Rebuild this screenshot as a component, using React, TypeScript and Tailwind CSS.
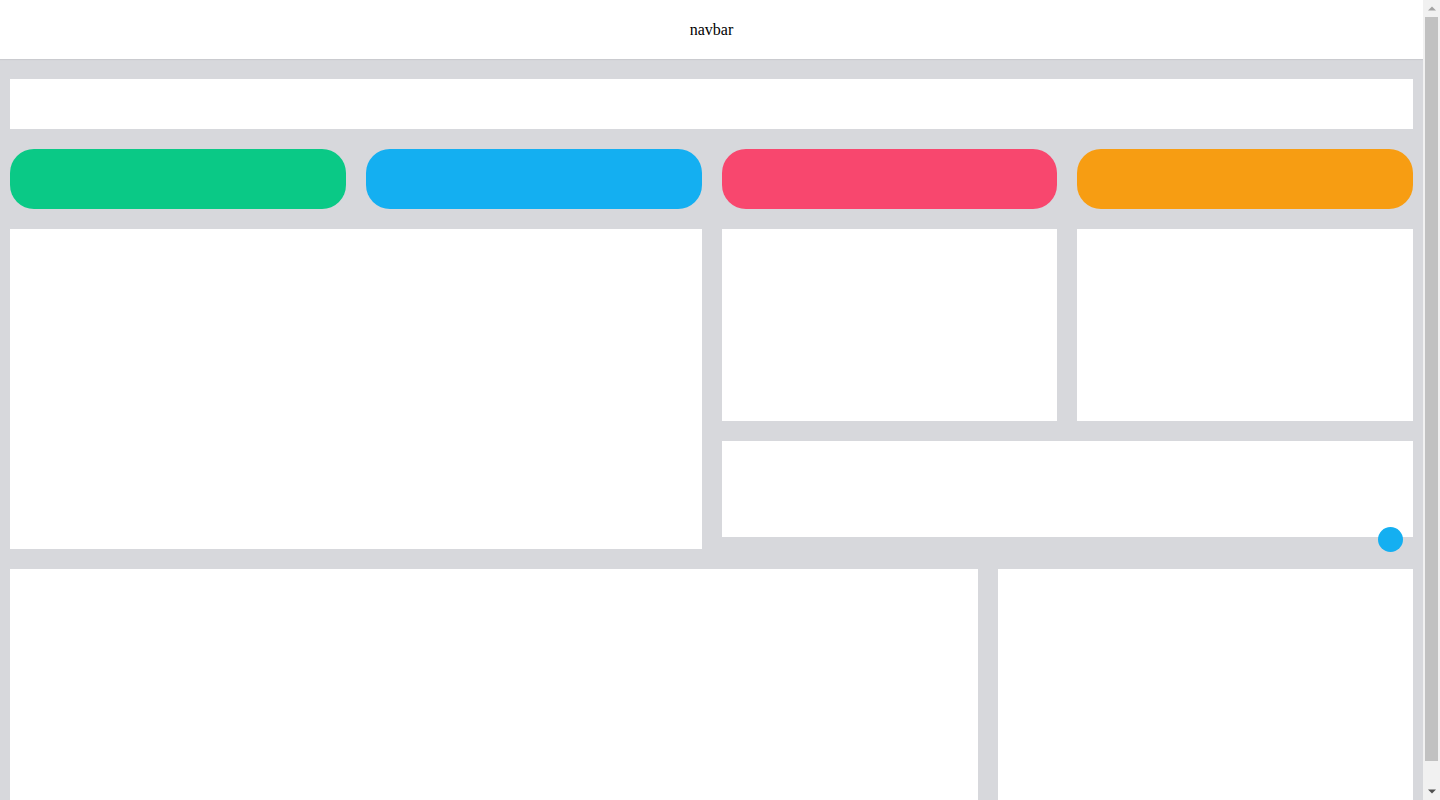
import React from 'react';

const stats = [
  { id: 'a', color: 'bg-[#0ac986]' },
  { id: 'b', color: 'bg-[#14aff1]' },
  { id: 'c', color: 'bg-[#f8476e]' },
  { id: 'd', color: 'bg-[#f79d12]' },
];

function ScrollTrack() {
  return (
    <div className="sticky top-0 h-screen w-[17px] shrink-0 bg-[#f1f1f1] flex flex-col items-center">
      <div className="h-[17px] w-full flex items-center justify-center">
        <svg width="8" height="5" viewBox="0 0 8 5"><path d="M0 4.5 L4 0.5 L8 4.5 Z" fill="#a3a3a3" /></svg>
      </div>
      <div className="w-[13px] h-[744px] bg-[#c1c1c1]" />
      <div className="flex-1" />
      <div className="h-[17px] w-full flex items-center justify-center">
        <svg width="8" height="5" viewBox="0 0 8 5"><path d="M0 0.5 L4 4.5 L8 0.5 Z" fill="#505050" /></svg>
      </div>
    </div>
  );
}

export default function App() {
  return (
    <div className="flex bg-[#d7d8dc]">
      <div className="flex-1 min-w-0">
        <nav className="h-[59px] bg-white flex items-center justify-center shadow-[0_1px_1px_rgba(0,0,0,0.06)] text-black text-base" style={{ fontFamily: '"Liberation Serif", "Times New Roman", serif' }}>
          navbar
        </nav>

        <main className="p-[10px] pt-5 flex flex-col gap-5">
          <div className="h-[50px] bg-white" />

          <div className="grid grid-cols-4 gap-5">
            {stats.map((s) => (
              <div key={s.id} className={`h-[60px] rounded-[24px] ${s.color}`} />
            ))}
          </div>

          <div className="grid grid-cols-4 gap-5">
            <div className="col-span-2 h-[320px] bg-white" />
            <div className="col-span-2 flex flex-col gap-5">
              <div className="grid grid-cols-2 gap-5">
                <div className="h-[192px] bg-white" />
                <div className="h-[192px] bg-white" />
              </div>
              <div className="relative h-[96px] bg-white">
                <span className="absolute right-[10px] -bottom-[15px] w-[25px] h-[25px] rounded-full bg-[#14aff1]" />
              </div>
            </div>
          </div>

          <div className="flex gap-5">
            <div className="flex-1 h-[245px] bg-white" />
            <div className="w-[415px] h-[245px] bg-white" />
          </div>
        </main>
      </div>
      <ScrollTrack />
    </div>
  );
}
